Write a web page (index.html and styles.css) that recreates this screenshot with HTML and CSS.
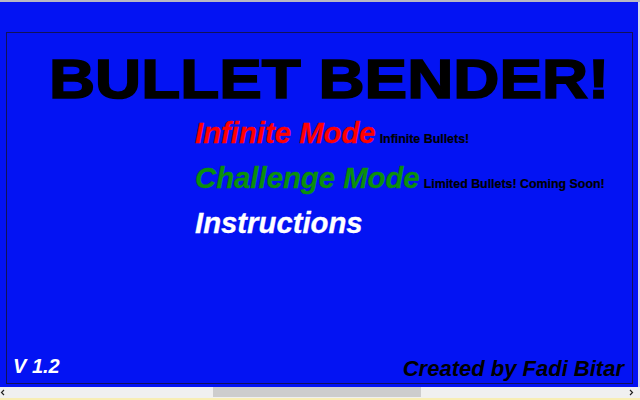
FILE: index.html
```html
<!DOCTYPE html>
<html>
<head>
<meta charset="utf-8">
<link rel="stylesheet" href="styles.css">
</head>
<body>
<div class="topline"></div>
<div class="main">
  <div class="viewport">
    <div class="stage">
      <h1 class="title">BULLET BENDER!</h1>
      <div class="menu">
        <div class="item"><span class="mode red">Infinite Mode</span><span class="note">Infinite Bullets!</span></div>
        <div class="item"><span class="mode green">Challenge Mode</span><span class="note">Limited Bullets! Coming Soon!</span></div>
        <div class="item"><span class="mode white">Instructions</span></div>
      </div>
      <div class="footer">
        <span class="version">V 1.2</span>
        <span class="credit">Created by Fadi Bitar</span>
      </div>
    </div>
  </div>
  <div class="vstrip"></div>
</div>
<div class="hscroll">
  <svg class="arrow" width="6" height="11" viewBox="0 0 6 11"><path d="M4 3 L1.5 5.5 L4 8" fill="none" stroke="#222" stroke-width="1.2"/></svg>
  <div class="track"><div class="thumb"></div></div>
  <svg class="arrow" width="6" height="11" viewBox="0 0 6 11"><path d="M2 3 L4.5 5.5 L2 8" fill="none" stroke="#222" stroke-width="1.2"/></svg>
</div>
<div class="bottomline"></div>
</body>
</html>
```
FILE: styles.css
```css
html, body {
  margin: 0;
  padding: 0;
  width: 640px;
  height: 400px;
  overflow: hidden;
  font-family: "Liberation Sans", Arial, sans-serif;
}
body {
  display: flex;
  flex-direction: column;
}
.topline {
  height: 2px;
  background: #b9b9c4;
}
.main {
  height: 385px;
  display: flex;
}
.viewport {
  flex: 1;
  background: #0313f3;
  padding: 30px 0 0 6px;
}
.vstrip {
  width: 2px;
  background: #d8d8ee;
}
.stage {
  box-sizing: border-box;
  width: 627px;
  height: 352px;
  border: 1px solid #12125a;
  display: flex;
  flex-direction: column;
}
.title {
  width: fit-content;
  margin: 16px 0 0 42px;
  font-size: 56px;
  line-height: 60px;
  font-weight: bold;
  color: #000;
  -webkit-text-stroke: 1.6px #000;
  white-space: nowrap;
  transform: scaleX(1.14);
  transform-origin: left center;
}
.menu {
  padding: 1px 0 0 188px;
}
.item {
  height: 45px;
  line-height: 45px;
  white-space: nowrap;
}
.mode {
  font-size: 29.3px;
  font-weight: bold;
  font-style: italic;
  -webkit-text-stroke: 0.3px currentColor;
}
.red { color: #ff0000; }
.green { color: #0b8f0b; }
.white { color: #ffffff; }
.note {
  font-size: 12.4px;
  font-weight: bold;
  color: #000;
  margin-left: 4px;
  -webkit-text-stroke: 0.2px #000;
}
.footer {
  margin-top: auto;
  display: flex;
  justify-content: space-between;
  align-items: flex-end;
  padding: 0 8px 1px 6px;
}
.version {
  font-size: 20px;
  font-weight: bold;
  font-style: italic;
  color: #fff;
  margin-bottom: 4px;
}
.credit {
  font-size: 22px;
  font-weight: bold;
  font-style: italic;
  color: #000;
}
.hscroll {
  height: 11px;
  display: flex;
  align-items: center;
  background: #f0f0f0;
}
.arrow {
  flex: none;
  margin: 0 2px 0 0;
}
.track {
  flex: 1;
  height: 11px;
  padding-left: 205px;
}
.thumb {
  width: 208px;
  height: 10px;
  background: #cdcdcd;
}
.hscroll .arrow:last-child {
  margin: 0 6px 0 0;
}
.bottomline {
  height: 2px;
  background: #f8eeb4;
}
```
